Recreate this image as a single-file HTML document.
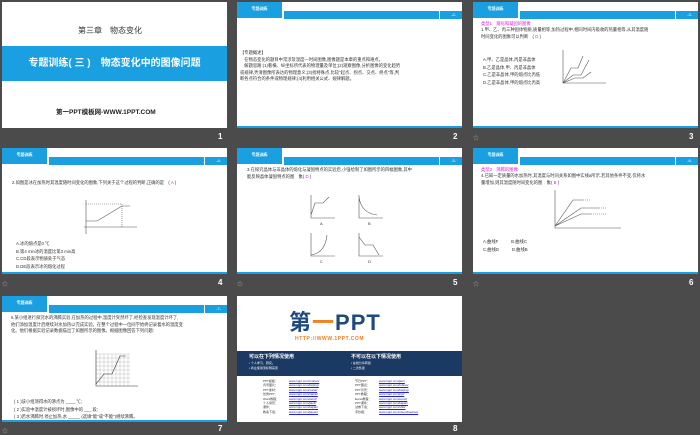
<!DOCTYPE html>
<html><head><meta charset="utf-8"><style>
*{margin:0;padding:0;box-sizing:border-box}
body{width:700px;height:435px;background:#4b4b4b;position:relative;overflow:hidden;font-family:"Liberation Sans","Noto Sans CJK SC",sans-serif}
.s{position:absolute;width:225px;height:126px;background:#fff;overflow:hidden}
.tab{position:absolute;left:0;top:0;width:45px;height:16px;background:#1aa0e0;color:#fff;font-size:4px;line-height:14px;text-align:center;font-weight:bold}
.band{position:absolute;left:47px;top:9px;right:0;height:8px;background:#1aa0e0}
.sep{position:absolute;right:22px;top:9px;width:1px;height:8px;background:#fff}
.pn{position:absolute;right:6px;top:9px;font-size:4px;color:#fff;line-height:8px}
.bot{position:absolute;left:0;right:0;bottom:0;height:2px;background:#1aa0e0}
.t{position:absolute;font-size:4.3px;line-height:6.5px;color:#333;white-space:nowrap}
.m{color:#e020e0}
.n{position:absolute;color:#fff;font-size:8px;font-weight:bold}
.st{position:absolute;color:#aaa;font-size:6px}
svg{position:absolute}
</style></head><body>

<!-- slide 1 -->
<div class="s" style="left:2px;top:2px">
 <div class="t" style="left:76px;top:24px;font-size:8px;line-height:10px;color:#333">第三章　物态变化</div>
 <div style="position:absolute;left:0;top:44px;width:225px;height:35px;background:#1aa0e0;color:#fff;font-size:10px;font-weight:bold;text-align:center;line-height:35px">专题训练( 三 )　物态变化中的图像问题</div>
 <div class="t" style="left:54px;top:107px;font-size:6.5px;font-weight:bold;color:#222;line-height:8px">第一PPT模板网-WWW.1PPT.COM</div>
</div>
<div class="n" style="left:218px;top:132px">1</div>

<!-- slide 2 -->
<div class="s" style="left:237px;top:2px">
 <div class="tab">专题训练</div><div class="band"></div><div class="sep"></div><div class="pn">-2-</div>
 <div class="t" style="left:3px;top:48px">【专题概述】<br>　在物态变化的题目中常涉及温度—时间图像,图像题是本章的重点和难点。<br>　解题思路:(1)看横、纵坐标所代表的物理量及单位;(2)观察图像,分析图像的变化趋势<br>或规律,弄清图像所表达的物理意义;(3)找特殊点,比较"起点、拐点、交点、终点"等,判<br>断各点符合的条件或物理规律;(4)利用相关公式、规律解题。</div>
 <div class="bot"></div>
</div>
<div class="n" style="left:453px;top:132px">2</div>

<!-- slide 3 -->
<div class="s" style="left:473px;top:2px">
 <div class="tab">专题训练</div><div class="band"></div><div class="sep"></div><div class="pn">-3-</div>
 <div class="t m" style="left:8px;top:19px">类型1　熔化和凝固的图像</div>
 <div class="t" style="left:8px;top:25px">1.甲、乙、丙三种固体物质,质量相等,加热过程中,相同时间内吸收的热量相等,从其温度随<br>时间变化的图象可以判断　( <span class="m">D</span> )</div>
 <div class="t" style="left:10px;top:54px;line-height:7.5px">A.甲、乙是晶体,丙是非晶体<br>B.乙是晶体,甲、丙是非晶体<br>C.乙是非晶体,甲的熔点比丙低<br>D.乙是非晶体,甲的熔点比丙高</div>
 <svg style="left:88px;top:46px" width="60" height="40"><g stroke="#555" stroke-width=".6" fill="none"><path d="M2 2V35H45"/><path d="M2 35L10 20H17L22 8M2 35L12 27H20L28 12M2 35L14 30H22L30 24"/></g></svg>
 <div class="bot"></div>
</div>
<div class="st" style="left:473px;top:133px">☆</div>
<div class="n" style="left:689px;top:132px">3</div>

<!-- slide 4 -->
<div class="s" style="left:2px;top:148px">
 <div class="tab">专题训练</div><div class="band"></div><div class="sep"></div><div class="pn">-4-</div>
 <div class="t" style="left:10px;top:32px">2.如图是冰在加热时其温度随时间变化的图象,下列关于这个过程的判断,正确的是　( <span class="m">A</span> )</div>
 <svg style="left:80px;top:50px" width="70" height="40"><g stroke="#555" stroke-width=".6" fill="none"><path d="M4 2V36M2 29H55"/><path d="M4 23H15L40 8H48" /><path d="M4 6H40V29" stroke-dasharray="1 1"/></g></svg>
 <div class="t" style="left:14px;top:92px;line-height:7.5px">A.冰的熔点是0 ℃<br>B.第4 min冰的温度比第3 min高<br>C.CD段表示物质处于气态<br>D.DE段表示冰的熔化过程</div>
 <div class="bot"></div>
</div>
<div class="st" style="left:2px;top:279px">☆</div>
<div class="n" style="left:218px;top:278px">4</div>

<!-- slide 5 -->
<div class="s" style="left:237px;top:148px">
 <div class="tab">专题训练</div><div class="band"></div><div class="sep"></div><div class="pn">-5-</div>
 <div class="t" style="left:10px;top:19px">3.在探究晶体与非晶体的熔化与凝固特点的实验后,小强绘制了如图所示的四幅图象,其中<br>能反映晶体凝固特点的图　象( <span class="m">D</span> )</div>
 <svg style="left:70px;top:45px" width="90" height="80"><g stroke="#555" stroke-width=".6" fill="none"><path d="M4 2V25H28M4 22L8 10H16L22 4"/><path d="M52 2V25H76M52 4Q54 20 70 22"/><path d="M4 40V63H28M4 62Q18 60 20 42"/><path d="M52 40V63H76M52 44L58 52H66L72 62"/></g><g font-size="4" fill="#333"><text x="13" y="32">A</text><text x="61" y="32">B</text><text x="13" y="70">C</text><text x="61" y="70">D</text></g></svg>
 <div class="bot"></div>
</div>
<div class="st" style="left:237px;top:279px">☆</div>
<div class="n" style="left:453px;top:278px">5</div>

<!-- slide 6 -->
<div class="s" style="left:473px;top:148px">
 <div class="tab">专题训练</div><div class="band"></div><div class="sep"></div><div class="pn">-6-</div>
 <div class="t m" style="left:8px;top:19px">类型2　沸腾的图像</div>
 <div class="t" style="left:8px;top:25px">4.已知一定质量的水加热时,其温度与时间关系如图中实线a所示,若其他条件不变,仅将水<br>量增加,则其温度随时间变化的图　象( <span class="m">B</span> )</div>
 <svg style="left:78px;top:40px" width="90" height="45"><g stroke="#555" stroke-width=".6" fill="none"><path d="M4 2V40H70"/><path d="M4 38L22 12H32M4 38L30 20H48M4 38L30 26H40" /><path d="M32 12H40M48 20H56M40 26H56" stroke-dasharray="1 1"/></g></svg>
 <div class="t" style="left:10px;top:90px;line-height:8px">A.曲线F　　　B.曲线C<br>C.曲线D　　　D.曲线B</div>
 <div class="bot"></div>
</div>
<div class="st" style="left:473px;top:279px">☆</div>
<div class="n" style="left:689px;top:278px">6</div>

<!-- slide 7 -->
<div class="s" style="left:2px;top:296px">
 <div class="tab">专题训练</div><div class="band"></div><div class="sep"></div><div class="pn">-7-</div>
 <div class="t" style="left:9px;top:19px">5.某小组进行探究水的沸腾实验,在加热的过程中,温度计突然坏了,经检查发现温度计坏了,<br>他们添加温度计后继续对水加热以完成实验。在整个过程中一位同学始终记录着水的温度变<br>化。他们根据实验记录数据描出了如图所示的图像。根据图像回答下列问题:</div>
 <svg style="left:84px;top:52px" width="60" height="45"><g stroke="#999" stroke-width=".3"><path d="M10 6H44M10 10H44M10 14H44M10 18H44M10 22H44M10 26H44M10 30H44M10 34H44M14 6V38M18 6V38M22 6V38M26 6V38M30 6V38M34 6V38M38 6V38M42 6V38"/></g><g stroke="#333" stroke-width=".6" fill="none"><path d="M10 2V38H52"/><path d="M10 36L18 26H26L34 8H40"/></g></svg>
 <div class="t" style="left:12px;top:102px;line-height:7.5px">( 1 )该小组测得水的沸点为 ____ ℃;<br>( 2 )实验中温度计被损坏时,图像中的 ___ 段;<br>( 3 )若水沸腾时,停止加热,水 _____ (选填"能"或"不能")继续沸腾。</div>
 <div class="bot"></div>
</div>
<div class="st" style="left:2px;top:426px">☆</div>
<div class="n" style="left:218px;top:424px">7</div>

<!-- slide 8 -->
<div class="s" style="left:237px;top:296px">
 <div style="position:absolute;left:52px;top:15px;font-size:22px;font-weight:bold;color:#1e4a80;line-height:24px;letter-spacing:1px">第<span style="color:#f08020">一</span>PPT</div>
 <div style="position:absolute;left:58px;top:40px;font-size:5px;color:#f08020;letter-spacing:.6px;font-weight:bold">HTTP://WWW.1PPT.COM</div>
 <div style="position:absolute;left:0;top:55px;width:225px;height:25px;background:#1b3a63"></div>
 <div class="t" style="left:12px;top:58px;color:#fff;font-size:5px;font-weight:bold">可以在下列情况使用</div>
 <div class="t" style="left:114px;top:58px;color:#fff;font-size:5px;font-weight:bold">不可以在以下情况使用</div>
 <div class="t" style="left:12px;top:65px;color:#fff;font-size:3px;line-height:5px">• 个人学习、研究。<br>• 商业使用须标明来源</div>
 <div class="t" style="left:114px;top:65px;color:#fff;font-size:3px;line-height:5px">• 在线分享转载<br>• 二次售卖</div>
 <div class="t" style="left:26px;top:83px;font-size:3px;line-height:4.4px">PPT模板：<br>背景图片：<br>PPT素材：<br>优秀PPT：<br>Word教程：<br>个人简历：<br>课件：<br>教案下载：</div>
 <div class="t" style="left:52px;top:83px;font-size:3px;line-height:4.4px;color:#22c;text-decoration:underline">www.1ppt.com/moban/<br>www.1ppt.com/beijing/<br>www.1ppt.com/sucai/<br>www.1ppt.com/xiazai/<br>www.1ppt.com/word/<br>www.1ppt.com/jianli/<br>www.1ppt.com/kejian/<br>www.1ppt.com/jiaoan/</div>
 <div class="t" style="left:118px;top:83px;font-size:3px;line-height:4.4px">节日PPT：<br>PPT图表：<br>PPT背景：<br>PPT教程：<br>Excel教程：<br>PPT课件：<br>试卷下载：<br>手抄报：</div>
 <div class="t" style="left:142px;top:83px;font-size:3px;line-height:4.4px;color:#22c;text-decoration:underline">www.1ppt.com/jieri/<br>www.1ppt.com/tubiao/<br>www.1ppt.com/beijing/<br>www.1ppt.com/ppt/<br>www.1ppt.com/excel/<br>www.1ppt.com/kejian/<br>www.1ppt.com/shiti/<br>www.1ppt.com/shouchaobao/</div>
</div>
<div class="n" style="left:453px;top:424px">8</div>
</body></html>
